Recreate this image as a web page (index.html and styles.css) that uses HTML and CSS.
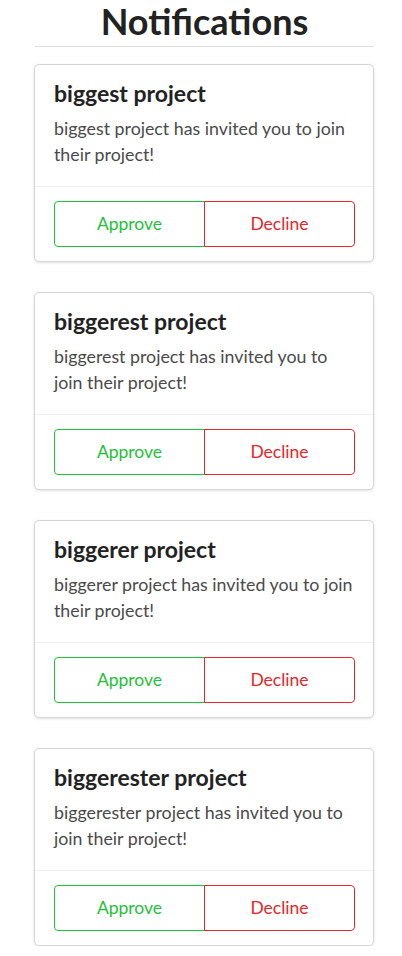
FILE: index.html
```html
<!DOCTYPE html>
<html>
<head>
<meta charset="utf-8">
<link rel="stylesheet" href="styles.css">
</head>
<body>
<div class="page">
  <h1 class="page-title">Notifications</h1>
  <div class="card">
    <div class="card-body">
      <h2 class="card-title">biggest project</h2>
      <p class="card-text">biggest project has invited you to join their project!</p>
    </div>
    <div class="card-footer">
      <button class="btn btn-approve">Approve</button>
      <button class="btn btn-decline">Decline</button>
    </div>
  </div>
  <div class="card">
    <div class="card-body">
      <h2 class="card-title">biggerest project</h2>
      <p class="card-text">biggerest project has invited you to join their project!</p>
    </div>
    <div class="card-footer">
      <button class="btn btn-approve">Approve</button>
      <button class="btn btn-decline">Decline</button>
    </div>
  </div>
  <div class="card">
    <div class="card-body">
      <h2 class="card-title">biggerer project</h2>
      <p class="card-text">biggerer project has invited you to join their project!</p>
    </div>
    <div class="card-footer">
      <button class="btn btn-approve">Approve</button>
      <button class="btn btn-decline">Decline</button>
    </div>
  </div>
  <div class="card">
    <div class="card-body">
      <h2 class="card-title">biggerester project</h2>
      <p class="card-text">biggerester project has invited you to join their project!</p>
    </div>
    <div class="card-footer">
      <button class="btn btn-approve">Approve</button>
      <button class="btn btn-decline">Decline</button>
    </div>
  </div>
</div>
</body>
</html>
```
FILE: styles.css
```css
html, body {
  margin: 0;
  padding: 0;
  background: #fff;
}
body {
  font-family: Lato, "Noto Sans", sans-serif;
  color: #222;
}
.page {
  margin: 0 28px 0 34px;
  padding-top: 2px;
}
.page-title {
  margin: 0 0 0 1px;
  padding-bottom: 6px;
  font-size: 36px;
  line-height: 38px;
  font-weight: 700;
  text-align: center;
  color: #222;
  border-bottom: 1px solid #dedede;
}
.card {
  margin-top: 17px;
  border: 1px solid #d6d6d6;
  border-radius: 5px;
  box-shadow: 0 1px 3px rgba(0,0,0,0.12);
  background: #fff;
}
.card + .card {
  margin-top: 30px;
}
.card-body {
  padding: 15px 16px 19px 19px;
}
.card-title {
  margin: 0 0 7.4px;
  font-size: 23px;
  line-height: 27.6px;
  font-weight: 700;
  color: #222;
}
.card-text {
  margin: 0;
  font-size: 17.8px;
  line-height: 26px;
  color: #4a4a4a;
}
.card-footer {
  display: flex;
  padding: 14px 18px 14px 19px;
  border-top: 1px solid #efefef;
}
.btn {
  flex: 1;
  height: 46px;
  background: #fff;
  font-family: Lato, "Noto Sans", sans-serif;
  font-size: 17.5px;
  padding: 0;
  cursor: pointer;
}
.btn-approve {
  color: #1fc13a;
  border: 1px solid #1fc13a;
  border-radius: 4px 0 0 4px;
}
.btn-decline {
  color: #e3262a;
  border: 1px solid #e3262a;
  border-radius: 0 4px 4px 0;
  margin-left: -1px;
  position: relative;
}
```
